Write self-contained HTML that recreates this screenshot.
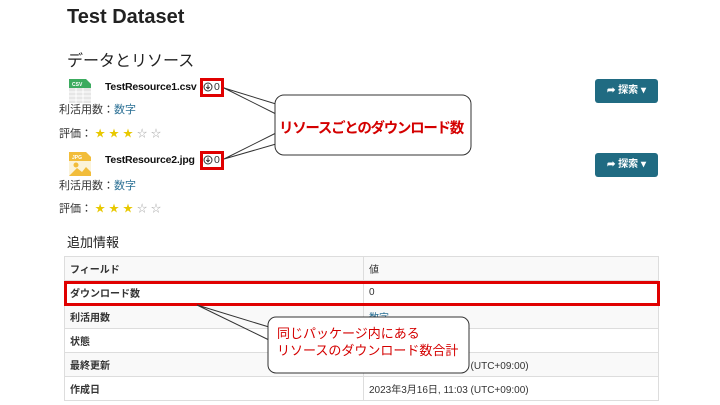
<!DOCTYPE html>
<html><head><meta charset="utf-8"><style>
*{margin:0;padding:0;box-sizing:border-box}
body{width:720px;height:405px;background:#fff;position:relative;overflow:hidden;font-family:"Liberation Sans","Noto Sans CJK JP",sans-serif;color:#333}
.a{position:absolute;white-space:nowrap}
.t{font-size:11px}
.star{color:#e8c800;font-size:10px;letter-spacing:4px}
.es{color:#aaa}
.btn{position:absolute;left:595px;width:63px;height:24px;background:#206b82;border-radius:3px;color:#fff;font-size:10px;font-weight:bold;text-align:center;line-height:24px}
table{position:absolute;left:64px;top:256px;width:595px;border-collapse:collapse;font-size:10px}
td{border:1px solid #ddd;height:24px;padding:0 5px;vertical-align:middle}
td:first-child{width:299px;font-weight:bold}
tr:nth-child(odd) td{background:#f9f9f9}
.red{position:absolute;border:3px solid #e00000}
.dl{position:absolute;font-size:10.5px}
</style></head><body>
<div class="a" style="left:67px;top:6px;font-size:20px;font-weight:bold;color:#222">Test Dataset</div>
<div class="a" style="left:67px;top:47px;font-size:16px;color:#222">データとリソース</div>

<svg class="a" style="left:67px;top:78px" width="26" height="26" viewBox="0 0 26 26">
<path d="M2 1h17l5 5v19H2z" fill="#e6e6e6"/><path d="M2 1h17l5 5v4H2z" fill="#3cab5f"/>
<path d="M2 14h22M2 18h22M2 22h22M9 10v15M16 10v15" stroke="#fff" stroke-width="1"/>
<text x="5" y="8" font-size="5" fill="#fff" font-family="Liberation Sans" font-weight="bold">CSV</text></svg>
<div class="a" style="left:105px;top:81px;font-size:10.5px;font-weight:bold;color:#111;letter-spacing:-0.2px">TestResource1.csv</div>
<svg class="a" style="left:203px;top:82px" width="10" height="10" viewBox="0 0 10 10"><circle cx="5" cy="5" r="4" fill="none" stroke="#333" stroke-width="1"/><path d="M5 2.5v4M3.3 5l1.7 1.8L6.7 5" fill="none" stroke="#333" stroke-width="1"/></svg>
<div class="dl" style="left:214px;top:81px">0</div>
<div class="a t" style="left:59px;top:101px">利活用数：<span style="color:#2a6f94">数字</span></div>
<div class="a t" style="left:59px;top:125px">評価： <span class="star">★★★<span class="es">☆☆</span></span></div>

<svg class="a" style="left:67px;top:151px" width="26" height="26" viewBox="0 0 26 26">
<path d="M2 1h17l5 5v19H2z" fill="#fbf3d9"/><path d="M2 1h17l5 5v4H2z" fill="#f2bd3a"/>
<circle cx="9" cy="14" r="2.5" fill="#f2bd3a"/><path d="M2 25l8-8 5 4 4-5 5 5v4z" fill="#f2bd3a"/>
<text x="5" y="8" font-size="5" fill="#fff" font-family="Liberation Sans" font-weight="bold">JPG</text></svg>
<div class="a" style="left:105px;top:154px;font-size:10.5px;font-weight:bold;color:#111;letter-spacing:-0.2px">TestResource2.jpg</div>
<svg class="a" style="left:203px;top:155px" width="10" height="10" viewBox="0 0 10 10"><circle cx="5" cy="5" r="4" fill="none" stroke="#333" stroke-width="1"/><path d="M5 2.5v4M3.3 5l1.7 1.8L6.7 5" fill="none" stroke="#333" stroke-width="1"/></svg>
<div class="dl" style="left:214px;top:154px">0</div>
<div class="a t" style="left:59px;top:177px">利活用数：<span style="color:#2a6f94">数字</span></div>
<div class="a t" style="left:59px;top:200px">評価： <span class="star">★★★<span class="es">☆☆</span></span></div>

<div class="btn" style="top:79px">➦ 探索 ▾</div>
<div class="btn" style="top:153px">➦ 探索 ▾</div>

<div class="a" style="left:67px;top:232px;font-size:13px;color:#222">追加情報</div>
<table>
<tr><td>フィールド</td><td>値</td></tr>
<tr><td>ダウンロード数</td><td>0</td></tr>
<tr><td>利活用数</td><td style="color:#2a6f94">数字</td></tr>
<tr><td>状態</td><td></td></tr>
<tr><td>最終更新</td><td>2023年3月16日, 11:03 (UTC+09:00)</td></tr>
<tr><td>作成日</td><td>2023年3月16日, 11:03 (UTC+09:00)</td></tr>
</table>

<div class="red" style="left:200px;top:78px;width:24px;height:19px"></div>
<div class="red" style="left:200px;top:151px;width:24px;height:19px"></div>
<div class="red" style="left:64px;top:281px;width:596px;height:25px"></div>

<svg class="a" style="left:0;top:0" width="720" height="405">
<path d="M276 104 L224 88 L276 114 M276 144 L224 159 L276 133" fill="none" stroke="#333" stroke-width="1"/>
<rect x="275" y="95" width="196" height="60" rx="9" fill="#fff" stroke="#333" stroke-width="1"/>
<path d="M269 327 L197 305 L269 340" fill="none" stroke="#333" stroke-width="1"/>
<rect x="268" y="317" width="201" height="56" rx="8" fill="#fff" stroke="#333" stroke-width="1"/>
<path d="M270 328 v11" stroke="#fff" stroke-width="2"/>
<path d="M277 106 v26" stroke="#fff" stroke-width="2"/>
</svg>
<div class="a" style="left:279px;top:117px;font-size:14.5px;font-weight:bold;color:#d40000;letter-spacing:-1.3px">リソースごとのダウンロード数</div>
<div class="a" style="left:277px;top:325px;font-size:13px;line-height:17px;color:#d40000">同じパッケージ内にある<br>リソースのダウンロード数合計</div>
</body></html>
